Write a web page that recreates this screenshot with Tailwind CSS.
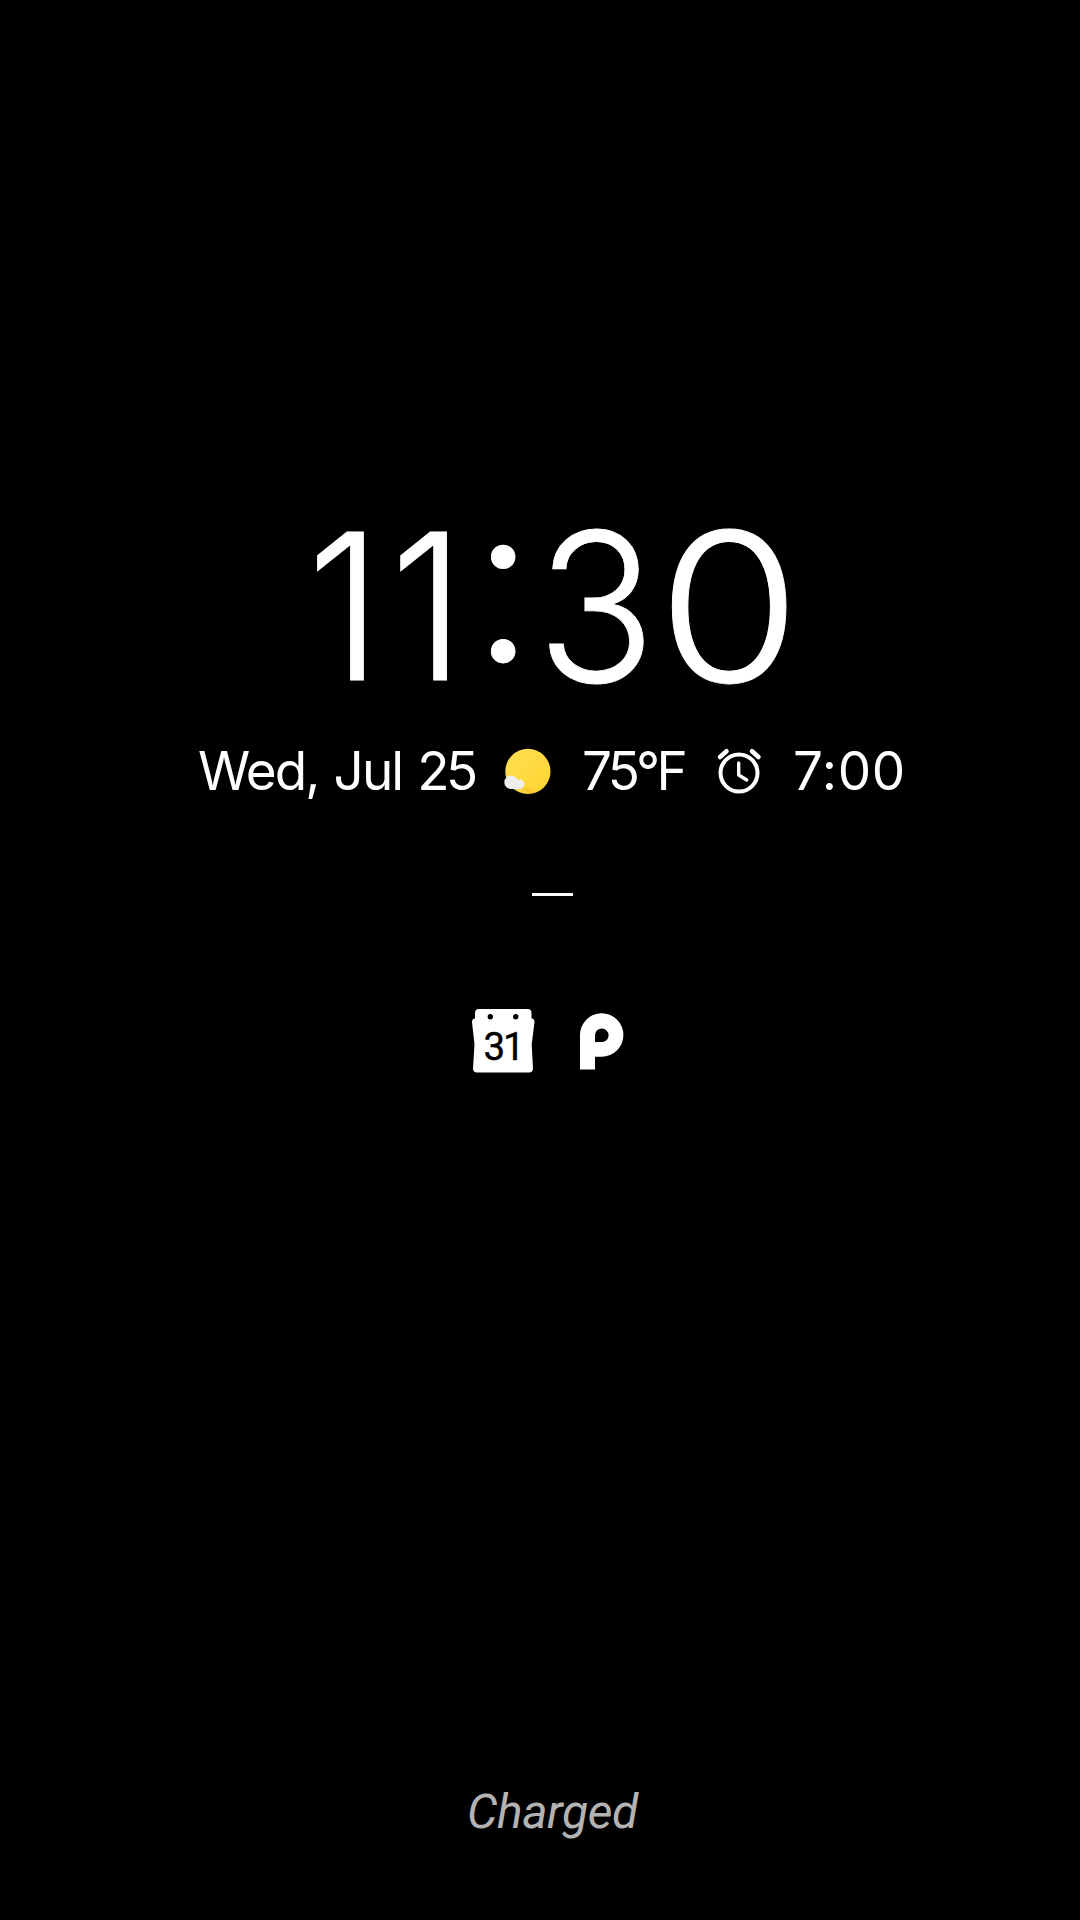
<!DOCTYPE html>
<html lang="en">
<head>
<meta charset="utf-8">
<title>Ambient display</title>
<script src="https://cdn.jsdelivr.net/npm/@tailwindcss/browser@4"></script>
</head>
<body class="bg-black">
<main class="flex h-[1920px] w-[1080px] flex-col overflow-hidden bg-black font-['Inter',sans-serif] text-white">
  <svg class="mt-[450px] ml-[260px] h-[280px] w-[580px] shrink-0 overflow-visible" viewBox="260 450 580 280" fill="#fff" stroke="#fff" stroke-width=".8" font-size="204" font-weight="300" role="img" aria-label="11:30">
    <text transform="translate(307 680) scale(.93 1)" x="0 89.500">11</text>
    <text transform="translate(471.400 662) scale(1.1)">:</text>
    <text transform="translate(536.500 682) scale(.965 1.020)">3</text>
    <text transform="translate(657.500 682) scale(1.137 1.020)">0</text>
  </svg>
  <div class="mt-[5px] ml-[198px] flex h-[72px] shrink-0 items-center whitespace-nowrap text-[53px] leading-[72px]">
    <span class="w-[302px] tracking-[-1.9px] [word-spacing:2px]">Wed, Jul <span class="tracking-[-3.5px]">25</span></span>
    <svg class="h-[48px] w-[52px] shrink-0" viewBox="0 0 52 48">
      <defs><linearGradient id="sun" x1="0" y1="0" x2="1" y2="1"><stop offset="0" stop-color="#ffdf55"/><stop offset="1" stop-color="#ffd42f"/></linearGradient></defs>
      <circle cx="27.900" cy="24.400" r="22.600" fill="url(#sun)"/>
      <path d="M20 41h11l5 5-7 .3z" fill="#f5b92c" opacity=".5"/>
      <path d="M11 42a6.700 6.700 0 1 1 0-13.400a7 7 0 0 1 6.400 4.400a4.800 4.800 0 1 1 1.200 9z" fill="#eee"/>
    </svg>
    <span class="ml-[30px] w-[133px] tracking-[-3.8px]">75°F</span>
    <svg class="h-[48px] w-[48px] shrink-0" viewBox="0 0 48 48" fill="none" stroke="#fff" stroke-width="4" stroke-linecap="round">
      <circle cx="24" cy="26" r="18.500"/><path d="M5 10 11.500 4.200M43.500 10 37 4.200" stroke-width="4.500"/><path d="M23.700 16v12l8 5" stroke-width="3.300" stroke-linejoin="round"/>
    </svg>
    <span class="ml-[30px] tracking-[0.6px]">7:00</span>
  </div>
  <div class="mt-[86px] ml-[532px] h-[3px] w-[41px] shrink-0 bg-[#f8fcff]"></div>
  <div class="mt-[112px] ml-[471px] flex shrink-0">
    <svg class="h-[66px] w-[64px]" viewBox="471 1008 64 66">
      <path d="M479 1009h48.500q4 0 4 4v5.500q3 0 3 3.500l-2.800 22.500 1.300 24q0 4-4 4h-52q-4 0-4-4l1.500-24-2.500-22.500q0-3.500 3-3.500v-5.500q0-4 4-4z" fill="#fff"/>
      <circle cx="490.300" cy="1016.700" r="2.700"/><circle cx="515.700" cy="1016.700" r="2.700"/>
      <text x="483.500 503" y="1059.500" font-family="Roboto, sans-serif" font-size="38.500" stroke="#000" stroke-width=".4">31</text>
    </svg>
    <svg class="ml-[43px] h-[66px] w-[50px]" viewBox="578 1008 50 66">
      <path fill="#fff" fill-rule="evenodd" d="M580 1069.500v-34a21.700 21.700 0 1 1 21.700 21.200H595v12.800zM595 1042h7a6.800 6.800 0 1 0-7-7z"/>
    </svg>
  </div>
  <div class="mt-[706px] ml-[467px] h-[64px] shrink-0 font-['Roboto',sans-serif] text-[48px] leading-[64px] tracking-[-0.4px] text-[#b3b3b3] italic">Charged</div>
</main>
</body>
</html>
